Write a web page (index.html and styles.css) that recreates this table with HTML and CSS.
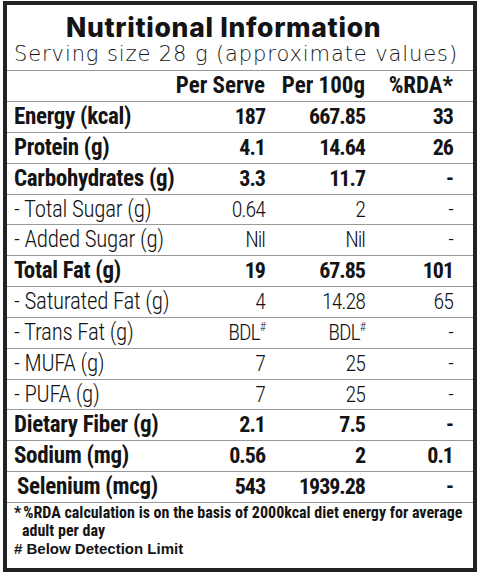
FILE: index.html
```html
<!DOCTYPE html>
<html lang="en">
<head>
    <meta charset="UTF-8">
    <meta name="viewport" content="width=device-width, initial-scale=1.0">
    <title>Nutritional Information</title>
    <link rel="stylesheet" href="styles.css">
</head>
<body>
    <div class="label">
        <div class="head">
            <h1>Nutritional Information</h1>
            <p class="serving">Serving size 28 g (approximate values)</p>
        </div>

        <div class="row row-head">
            <span></span><span>Per Serve</span><span>Per 100g</span><span>%RDA*</span>
        </div>

        <div class="row main"><span>Energy (kcal)</span><span>187</span><span>667.85</span><span>33</span></div>
        <div class="row main"><span>Protein (g)</span><span>4.1</span><span>14.64</span><span>26</span></div>
        <div class="row main"><span>Carbohydrates (g)</span><span>3.3</span><span>11.7</span><span>-</span></div>
        <div class="row sub"><span>- Total Sugar (g)</span><span>0.64</span><span>2</span><span>-</span></div>
        <div class="row sub"><span>- Added Sugar (g)</span><span>Nil</span><span>Nil</span><span>-</span></div>
        <div class="row main"><span>Total Fat (g)</span><span>19</span><span>67.85</span><span>101</span></div>
        <div class="row sub"><span>- Saturated Fat (g)</span><span>4</span><span>14.28</span><span>65</span></div>
        <div class="row sub"><span>- Trans Fat (g)</span><span>BDL<sup>#</sup></span><span>BDL<sup>#</sup></span><span>-</span></div>
        <div class="row sub"><span>- MUFA (g)</span><span>7</span><span>25</span><span>-</span></div>
        <div class="row sub"><span>- PUFA (g)</span><span>7</span><span>25</span><span>-</span></div>
        <div class="row main"><span>Dietary Fiber (g)</span><span>2.1</span><span>7.5</span><span>-</span></div>
        <div class="row main"><span>Sodium (mg)</span><span>0.56</span><span>2</span><span>0.1</span></div>
        <div class="row main last"><span class="indent">Selenium (mcg)</span><span>543</span><span>1939.28</span><span>-</span></div>

        <div class="notes">
            <p class="rda">*<span>%RDA calculation is on the basis of 2000kcal diet energy for average</span></p>
            <p class="rda-cont">adult per day</p>
            <p class="bdl"># Below Detection Limit</p>
        </div>
    </div>
</body>
</html>
```

FILE: styles.css
```css
body {
    margin: 0;
    background: #ffffff;
    color: #141414;
}

/* caixa externa */
.label {
    box-sizing: border-box;
    width: 474px;
    height: 571px;
    margin: 1px 0 0 3px;
    border: 4px solid #222;
    display: flex;
    flex-direction: column;
}

.head {
    height: 65px;
    padding-left: 7px;
    border-bottom: 1px solid #999;
}

h1 {
    margin: 8px 0 0 52px;
    font-family: Inter, sans-serif;
    font-weight: 800;
    font-size: 26.5px;
    letter-spacing: 0.7px;
    line-height: 28px;
}

.serving {
    margin: 0;
    font-family: "DejaVu Sans", sans-serif;
    font-weight: 200;
    font-size: 21px;
    letter-spacing: 0.9px;
    line-height: 26px;
    white-space: nowrap;
}

/* linhas da tabela */
.row {
    display: grid;
    grid-template-columns: minmax(0, 1fr) 100px 100px 88px;
    align-items: center;
    height: 29.85px;
    padding: 0 20px 0 7px;
    border-bottom: 1px solid #999;
    font-family: Roboto, sans-serif;
    font-stretch: 75%;
    font-size: 23px;
    letter-spacing: -0.3px;
    line-height: 30px;
    white-space: nowrap;
}

.row-head {
    height: 30px;
    letter-spacing: 0;
}

.row span:not(:first-child) {
    text-align: right;
}

.row:not(.row-head) span:not(:first-child) {
    font-size: 22px;
    letter-spacing: -1px;
}

.row-head,
.main {
    font-weight: bold;
}

.sub {
    font-weight: 350;
}

.indent {
    padding-left: 3px;
}

sup {
    font-size: 12px;
    line-height: 0;
    vertical-align: 9px;
}

/* notas de rodapé */
.notes {
    padding: 1px 7px 0;
    font-family: Roboto, sans-serif;
    font-stretch: 75%;
    font-weight: bold;
    font-size: 16px;
    line-height: 18px;
    white-space: nowrap;
}

.notes p {
    margin: 0;
}

.rda span {
    margin-left: 2px;
}

.rda-cont {
    padding-left: 8px;
}

.bdl {
    font-family: "Liberation Sans", sans-serif;
    font-stretch: normal;
    font-size: 15px;
}
```
